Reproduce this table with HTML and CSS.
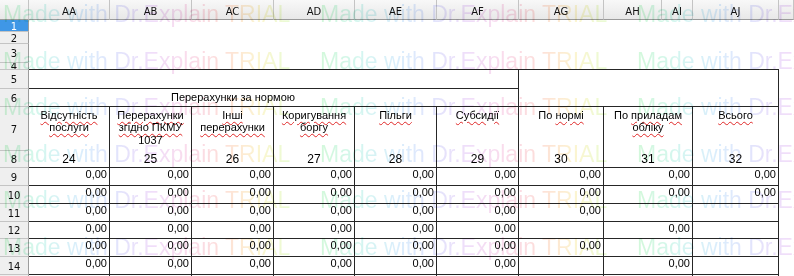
FILE: index.html
```html
<!DOCTYPE html>
<html lang="uk">
<head>
<meta charset="utf-8">
<title>Sheet</title>
<link rel="stylesheet" href="styles.css">
</head>
<body>
<div class="sheet">
  <div class="ch"></div>
  <div class="ch">AA</div><div class="ch">AB</div><div class="ch">AC</div><div class="ch">AD</div><div class="ch">AE</div><div class="ch">AF</div><div class="ch">AG</div><div class="ch">AH</div><div class="ch">AI</div><div class="ch">AJ</div><div class="ch"></div>

  <div class="rh sel">1</div><div class="c s11"></div>
  <div class="rh">2</div><div class="c s11"></div>
  <div class="rh">3</div><div class="c s11"></div>
  <div class="rh">4</div><div class="c s10 bb"></div><div class="c"></div>

  <div class="rh">5</div><div class="c s6 br bb"></div><div class="c s4 r2 br bb"></div><div class="c"></div>
  <div class="rh">6</div><div class="c s5 bb title">Перерахунки за нормою</div><div class="c br bb"></div><div class="c"></div>

  <div class="rh">7</div>
  <div class="c br h"><span class="sq">Відсутність</span><br><span class="sq">послуги</span></div>
  <div class="c br h"><span class="sq">Перерахунки</span><br><span class="sq">згідно ПКМУ</span><br>1037</div>
  <div class="c br h"><span class="sq">Інші</span><br><span class="sq">перерахунки</span></div>
  <div class="c br h"><span class="sq">Коригування</span><br><span class="sq">боргу</span></div>
  <div class="c br h"><span class="sq">Пільги</span></div>
  <div class="c br h"><span class="sq">Субсидії</span></div>
  <div class="c br h">По <span class="sq">нормі</span></div>
  <div class="c s2 br h">По <span class="sq">приладам</span><br><span class="sq">обліку</span></div>
  <div class="c br h"><span class="sq">Всього</span></div>
  <div class="c"></div>

  <div class="rh">8</div>
  <div class="c br bb num">24</div><div class="c br bb num">25</div><div class="c br bb num">26</div><div class="c br bb num">27</div><div class="c br bb num">28</div><div class="c br bb num">29</div><div class="c br bb num">30</div><div class="c s2 br bb num">31</div><div class="c br bb num">32</div><div class="c"></div>

  <div class="rh">9</div>
  <div class="c br bb n">0,00</div><div class="c br bb n">0,00</div><div class="c br bb n">0,00</div><div class="c br bb n">0,00</div><div class="c br bb n">0,00</div><div class="c br bb n">0,00</div><div class="c br bb n">0,00</div><div class="c s2 br bb n">0,00</div><div class="c br bb n">0,00</div><div class="c"></div>

  <div class="rh">10</div>
  <div class="c br bb n">0,00</div><div class="c br bb n">0,00</div><div class="c br bb n">0,00</div><div class="c br bb n">0,00</div><div class="c br bb n">0,00</div><div class="c br bb n">0,00</div><div class="c br bb n">0,00</div><div class="c s2 br bb n">0,00</div><div class="c br bb n">0,00</div><div class="c"></div>

  <div class="rh">11</div>
  <div class="c br bb n">0,00</div><div class="c br bb n">0,00</div><div class="c br bb n">0,00</div><div class="c br bb n">0,00</div><div class="c br bb n">0,00</div><div class="c br bb n">0,00</div><div class="c br bb n">0,00</div><div class="c s2 br bb n"></div><div class="c br bb n"></div><div class="c"></div>

  <div class="rh">12</div>
  <div class="c br bb n">0,00</div><div class="c br bb n">0,00</div><div class="c br bb n">0,00</div><div class="c br bb n">0,00</div><div class="c br bb n">0,00</div><div class="c br bb n">0,00</div><div class="c br bb n"></div><div class="c s2 br bb n">0,00</div><div class="c br bb n"></div><div class="c"></div>

  <div class="rh">13</div>
  <div class="c br bb n">0,00</div><div class="c br bb n">0,00</div><div class="c br bb n">0,00</div><div class="c br bb n">0,00</div><div class="c br bb n">0,00</div><div class="c br bb n">0,00</div><div class="c br bb n">0,00</div><div class="c s2 br bb n"></div><div class="c br bb n"></div><div class="c"></div>

  <div class="rh">14</div>
  <div class="c br bb n">0,00</div><div class="c br bb n">0,00</div><div class="c br bb n">0,00</div><div class="c br bb n">0,00</div><div class="c br bb n">0,00</div><div class="c br bb n">0,00</div><div class="c br bb n"></div><div class="c s2 br bb n">0,00</div><div class="c br bb n"></div><div class="c"></div>

  <div class="rh last"></div>
  <div class="c br"></div><div class="c br"></div><div class="c br"></div><div class="c br"></div><div class="c br"></div><div class="c br"></div><div class="c br"></div><div class="c s2 br"></div><div class="c br"></div><div class="c"></div>
</div>

<div class="wm" aria-hidden="true">
  <div class="wm-row"><b><i>Made with Dr.Explain TRIAL</i></b><b><i>Made with Dr.Explain TRIAL</i></b><b><i>Made with Dr.Explain TRIAL</i></b></div>
  <div class="wm-row"><b><i>Made with Dr.Explain TRIAL</i></b><b><i>Made with Dr.Explain TRIAL</i></b><b><i>Made with Dr.Explain TRIAL</i></b></div>
  <div class="wm-row"><b><i>Made with Dr.Explain TRIAL</i></b><b><i>Made with Dr.Explain TRIAL</i></b><b><i>Made with Dr.Explain TRIAL</i></b></div>
  <div class="wm-row"><b><i>Made with Dr.Explain TRIAL</i></b><b><i>Made with Dr.Explain TRIAL</i></b><b><i>Made with Dr.Explain TRIAL</i></b></div>
  <div class="wm-row"><b><i>Made with Dr.Explain TRIAL</i></b><b><i>Made with Dr.Explain TRIAL</i></b><b><i>Made with Dr.Explain TRIAL</i></b></div>
  <div class="wm-row"><b><i>Made with Dr.Explain TRIAL</i></b><b><i>Made with Dr.Explain TRIAL</i></b><b><i>Made with Dr.Explain TRIAL</i></b></div>
</div>
</body>
</html>
```

FILE: styles.css
```css
* { box-sizing: border-box; margin: 0; padding: 0; }
html, body { background: #fff; }
body {
  width: 794px;
  height: 276px;
  overflow: hidden;
  position: relative;
  font-family: "Liberation Sans", Arial, sans-serif;
  font-size: 11px;
  color: #000;
}

.sheet {
  display: grid;
  grid-template-columns: 29px 81px 82px 82px 81px 82px 82px 85px 58px 31px 86px 1fr;
  grid-template-rows: 20px 12px 12px 19px 7px 19px 18px 44px 17px 18px 18px 18px 17px 18px 18px 1px;
  height: 276px;
  overflow: hidden;
}
.sheet > div { overflow: hidden; min-width: 0; min-height: 0; }

.ch {
  background: linear-gradient(#f8f8f8, #e8e8e8);
  border-right: 1px solid #c4c4c4;
  border-bottom: 1px solid #9a9a9a;
  font-family: "DejaVu Sans", sans-serif;
  font-size: 10px;
  color: #111;
  display: flex;
  align-items: center;
  justify-content: center;
  padding-top: 3px;
}

.rh {
  background: #efefef;
  border-right: 1px solid #9c9c9c;
  border-bottom: 1px solid #c4c4c4;
  font-family: "DejaVu Sans", sans-serif;
  font-size: 10px;
  color: #111;
  display: flex;
  align-items: center;
  justify-content: center;
  line-height: 11px;
  padding-top: 1px;
}
.rh.sel { background: #3f97e6; color: #fff; }
.rh.last { border-bottom: 0; }

.s2 { grid-column: span 2; }
.s4 { grid-column: span 4; }
.s5 { grid-column: span 5; }
.s6 { grid-column: span 6; }
.s10 { grid-column: span 10; }
.s11 { grid-column: span 11; }
.r2 { grid-row: span 2; }

.br { border-right: 1px solid #262626; }
.bb { border-bottom: 1px solid #262626; }

.title {
  text-align: center;
  line-height: 12.5px;
  padding-top: 1.5px;
}

.h {
  text-align: center;
  line-height: 12.5px;
  padding-top: 1.5px;
}

.sq {
  text-decoration: underline wavy #e02828;
  text-decoration-thickness: 1px;
  text-underline-offset: 2px;
}

.num {
  font-size: 12px;
  line-height: 14px;
  text-align: center;
  padding-top: 1px;
}

.n {
  text-align: right;
  line-height: 13px;
  padding-right: 2px;
}

.wm {
  position: absolute;
  left: 0;
  top: -9px;
  width: 794px;
  height: 285px;
  pointer-events: none;
  mix-blend-mode: multiply;
  opacity: 0.6;
  font-family: "Liberation Sans", Arial, sans-serif;
  font-size: 23px;
  line-height: 46.6px;
  white-space: nowrap;
  overflow: hidden;
}
.wm-row { display: flex; padding-left: 3px; }
.wm-row b { flex: none; width: 317px; font-weight: normal; }
.wm-row i {
  font-style: normal;
  background: linear-gradient(90deg,
    #b6f4c2 0%, #b8f0e6 14%, #c2e2fa 27%, #cfd2fa 40%,
    #e6c8f6 52%, #f6c4e0 64%, #fac6c6 74%, #fcd8b6 82%,
    #f8f0b2 90%, #daf8b8 100%);
  -webkit-background-clip: text;
  background-clip: text;
  color: transparent;
}
```
